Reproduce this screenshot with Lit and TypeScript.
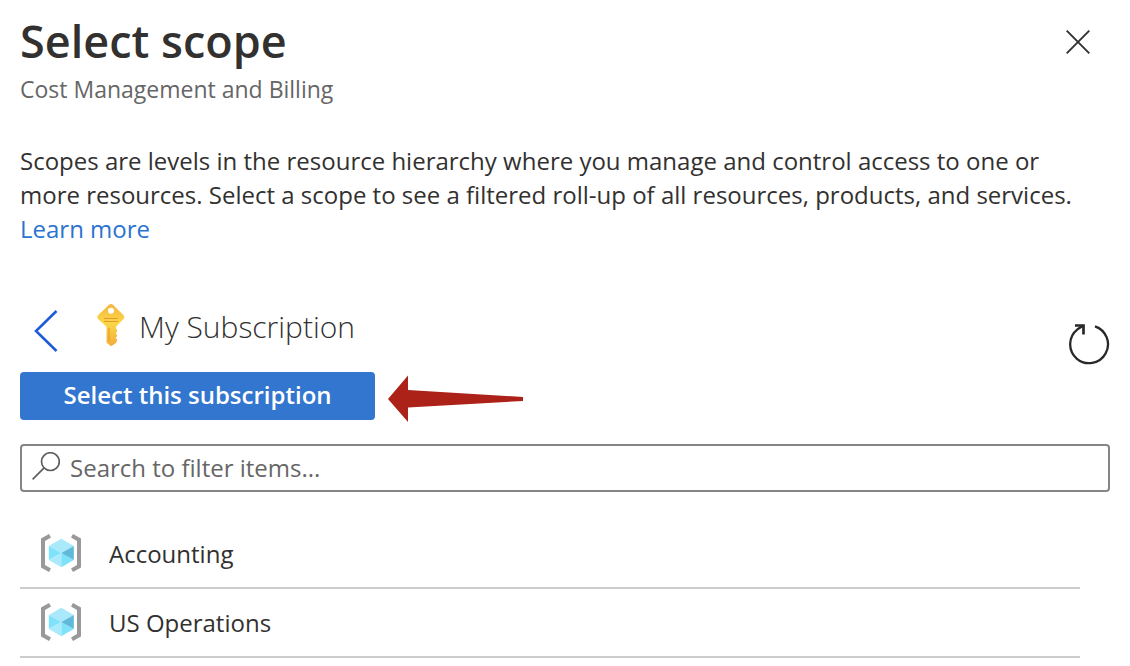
import { LitElement, html, css, svg } from "lit";
import { customElement, property, state } from "lit/decorators.js";

@customElement("resource-group-icon")
class ResourceGroupIcon extends LitElement {
  static styles = css`
    :host { display: block; flex: none; width: 40px; height: 38px; }
    svg { display: block; }
  `;

  render() {
    return html`
      <svg width="40" height="38" viewBox="0 0 40 38" aria-hidden="true">
        <g fill="#999">
          <path d="M0 4.500L8 0l2 3.400L4 7v24l6 3.600L8 38l-8-4.500z" />
          <path d="M40 4.500L32 0l-2 3.400L36 7v24l-6 3.600 2 3.400 8-4.500z" />
        </g>
        <path fill="#aae8fb" d="M20.300 4.700L32.800 11.900 20.300 19 7.800 11.900z" />
        <path fill="#7fe2fb" d="M7.800 11.900L20.300 19 7.800 26.100z" />
        <path fill="#aaeafc" d="M7.800 26.100L20.300 19V33.200z" />
        <path fill="#7fe2fb" d="M20.300 19L32.800 26.100 20.300 33.200z" />
        <path fill="#5fb9d8" d="M32.800 11.900V26.100L20.300 19z" />
      </svg>
    `;
  }
}

const closeIcon = svg`<svg width="24" height="24" viewBox="0 0 24 24" aria-hidden="true"><path d="M.7.700L23.300 23.300M23.300.7L.7 23.300" fill="none" stroke="#323130" stroke-width="1.900"/></svg>`;
const backIcon = svg`<svg width="24" height="42" viewBox="0 0 24 42" aria-hidden="true"><path d="M22.500 1L2 21l20.500 20" fill="none" stroke="#1f5bd8" stroke-width="2.600"/></svg>`;
const refreshIcon = svg`<svg width="42" height="42" viewBox="0 0 42 42" aria-hidden="true">
  <path d="M27 3.300A18.900 18.900 0 1 1 9.500 6.300L15.500 2.600" fill="none" stroke="#292827" stroke-width="2.300"/>
  <path d="M7 2.500h8.500v9" fill="none" stroke="#292827" stroke-width="2.700"/></svg>`;
const searchIcon = svg`<svg width="28" height="28" viewBox="0 0 28 28" aria-hidden="true"><g fill="none" stroke="#605e5c" stroke-width="1.700"><circle cx="18.400" cy="9.600" r="8.900"/><path d="M12.100 15.900L.6 27.400"/></g></svg>`;
const keyIcon = svg`<svg width="28" height="42" viewBox="0 0 28 42" aria-hidden="true">
  <defs><linearGradient id="gold" x1="0" y1="0" x2="0" y2="1"><stop offset="0" stop-color="#f5b441"/><stop offset=".45" stop-color="#fad746"/><stop offset="1" stop-color="#f3ad3c"/></linearGradient></defs>
  <path fill="url(#gold)" fill-rule="evenodd" d="M12 .8q2-1.600 4 0L26.300 11q2 2 0 4.200L19 22.800v1.700l1 1.200v2l-1.400 1.400 1.400 1.500v1.800l-1.400 1.400 1.400 1.400v2l-1 1.200v.6L14.500 42h-.8L9.500 38.400V22.800L1.300 15.200q-2-2.200 0-4.200zM14 3.700a3 3 0 1 0 0 6 3 3 0 1 0 0-6z"/>
  <path d="M7 14.500h14M7 17.500h14M12 24v13" fill="none" stroke="#e79a2c" stroke-width="1.100"/></svg>`;
const arrowIcon = svg`<svg class="pointer" width="136" height="48" viewBox="0 0 136 48" aria-hidden="true"><path fill="#ac2118" d="M0 24L20 .5V15L135 22v4L20 32.500V47z"/></svg>`;

@customElement("app-root")
class AppRoot extends LitElement {
  @property({ type: String }) subscription = "My Subscription";
  @state() private query = "";
  private groups = ["Accounting", "US Operations"];

  static styles = css`
    :host {
      display: block;
      padding: 15px 20px 8px;
      background: #fff;
      color: #323130;
      font-family: "Segoe UI", "Open Sans", "Noto Sans", sans-serif;
      font-size: 24px;
      line-height: 34px;
    }
    button { font: inherit; border: 0; padding: 0; background: none; cursor: pointer; }
    svg { display: block; flex: none; }
    .header { display: flex; justify-content: space-between; align-items: flex-start; }
    h1 { margin: 0; font-size: 45px; line-height: 52px; font-weight: 600; }
    .subtitle { margin: 5px 0 0; font-size: 23px; color: #666; }
    .close { margin: 15px 20px 0 0; }
    .intro { margin: 38px 30px 0 0; }
    a { color: #2b73d0; text-decoration: none; }
    .scope { display: flex; align-items: center; height: 58px; margin-top: 52px; }
    .back { margin: 8px 39px 0 14px; }
    .key { margin-bottom: 4px; }
    h2 { flex: 1; margin: 0 0 0 14px; font-size: 30px; line-height: 42px; font-weight: 300; }
    .refresh { margin-top: 34px; }
    .actions { display: flex; align-items: flex-start; gap: 13px; margin-top: 16px; }
    .select { width: 355px; height: 48px; padding-bottom: 2px; border-radius: 4px; background: #3276cf; color: #fff; font-weight: 600; }
    .pointer { margin-top: 3px; }
    .search { display: flex; align-items: center; gap: 10px; height: 48px; box-sizing: border-box; margin-top: 21px; padding: 0 10px; border: 2px solid #858585; border-radius: 4px; }
    .search svg { margin-bottom: 4px; }
    .search input { flex: 1; min-width: 0; padding: 0; border: 0; outline: 0; background: none; color: inherit; font: inherit; }
    .search input::placeholder { color: #666; opacity: 1; }
    ul { list-style: none; margin: 28px 30px 0 0; padding: 0; }
    li { display: flex; align-items: center; gap: 28px; box-sizing: border-box; height: 69px; padding-left: 21px; border-bottom: 2px solid #ccc; }
    resource-group-icon { margin-bottom: 2px; }
  `;

  render() {
    const shown = this.groups.filter((g) => g.toLowerCase().includes(this.query.toLowerCase()));
    return html`
      <header class="header">
        <div>
          <h1>Select scope</h1>
          <p class="subtitle">Cost Management and Billing</p>
        </div>
        <button class="close" aria-label="Close">${closeIcon}</button>
      </header>
      <p class="intro">
        Scopes are levels in the resource hierarchy where you manage and control access to one or
        more resources. Select a scope to see a filtered roll-up of all resources, products, and services.
        <a href="#">Learn more</a>
      </p>
      <div class="scope">
        <button class="back" aria-label="Back">${backIcon}</button>
        <span class="key">${keyIcon}</span>
        <h2>${this.subscription}</h2>
        <button class="refresh" aria-label="Refresh">${refreshIcon}</button>
      </div>
      <div class="actions">
        <button class="select">Select this subscription</button>
        ${arrowIcon}
      </div>
      <label class="search">
        ${searchIcon}
        <input
          type="text"
          aria-label="Search to filter items"
          placeholder="Search to filter items..."
          .value=${this.query}
          @input=${(e: Event) => (this.query = (e.target as HTMLInputElement).value)}
        />
      </label>
      <ul>
        ${shown.map((name) => html`<li><resource-group-icon></resource-group-icon><span>${name}</span></li>`)}
      </ul>
    `;
  }
}
